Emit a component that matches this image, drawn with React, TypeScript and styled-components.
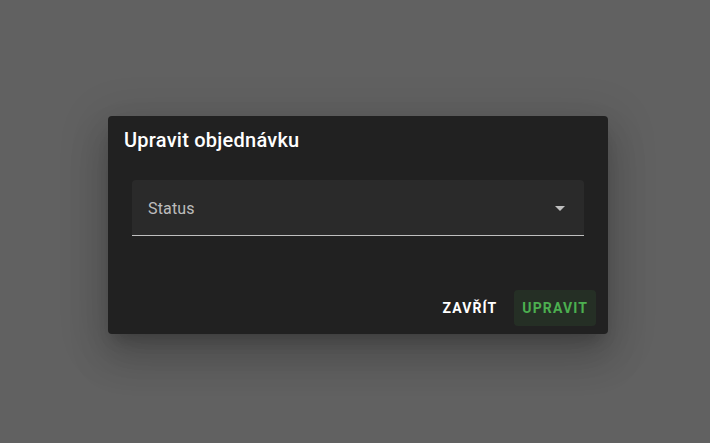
import React from "react";
import styled, { createGlobalStyle } from "styled-components";

const Global = createGlobalStyle`
  html, body { margin: 0; padding: 0; }
  body { background: #616161; font-family: Roboto, "Noto Sans", sans-serif; }
  * { box-sizing: border-box; }
`;

const Backdrop = styled.div`
  width: 710px;
  height: 443px;
  display: flex;
  align-items: center;
  justify-content: center;
  padding: 7px 0 0 6px;
  background: #616161;
`;

const Dialog = styled.div`
  width: 500px;
  background: #212121;
  border-radius: 4px;
  display: flex;
  flex-direction: column;
  box-shadow: 0px 11px 15px -7px rgba(0,0,0,0.2), 0px 24px 38px 3px rgba(0,0,0,0.14), 0px 9px 46px 8px rgba(0,0,0,0.12);
`;

const Title = styled.h2`
  margin: 0;
  padding: 8px 16px;
  font-size: 20px;
  font-weight: 500;
  line-height: 32px;
  letter-spacing: 0.012em;
  color: #ffffff;
`;

const Content = styled.div`
  padding: 16px 24px 46px;
`;

const Field = styled.div`
  position: relative;
  height: 56px;
  background: #2a2a2a;
  border-top-left-radius: 4px;
  border-top-right-radius: 4px;
  border-bottom: 1px solid rgba(255,255,255,0.7);
  display: flex;
  align-items: center;
  padding: 0 16px;
  cursor: pointer;
`;

const Label = styled.span`
  flex: 1;
  font-size: 16px;
  line-height: 23px;
  padding-top: 1px;
  letter-spacing: 0.00938em;
  color: rgba(255,255,255,0.7);
`;

const Arrow = styled.svg`
  width: 24px;
  height: 24px;
  margin-right: -4px;
  fill: rgba(255,255,255,0.7);
`;

const Actions = styled.div`
  display: flex;
  justify-content: flex-end;
  align-items: center;
  gap: 9px;
  padding: 8px 12px 8px 8px;
`;

const Button = styled.button<{ $green?: boolean }>`
  height: 36px;
  padding: 0 8px;
  border: none;
  border-radius: 4px;
  background: ${(p) => (p.$green ? "rgba(76,175,80,0.1)" : "transparent")};
  color: ${(p) => (p.$green ? "#4caf50" : "#ffffff")};
  font-family: Roboto, "Noto Sans", sans-serif;
  font-size: 14px;
  font-weight: 700;
  letter-spacing: 0.08em;
  text-transform: uppercase;
  cursor: pointer;
`;

export default function App() {
  return (
    <>
      <Global />
      <Backdrop>
        <Dialog>
          <Title>Upravit objednávku</Title>
          <Content>
            <Field>
              <Label>Status</Label>
              <Arrow viewBox="0 0 24 24">
                <path d="M7 10l5 5 5-5z" />
              </Arrow>
            </Field>
          </Content>
          <Actions>
            <Button>Zavřít</Button>
            <Button $green>Upravit</Button>
          </Actions>
        </Dialog>
      </Backdrop>
    </>
  );
}
